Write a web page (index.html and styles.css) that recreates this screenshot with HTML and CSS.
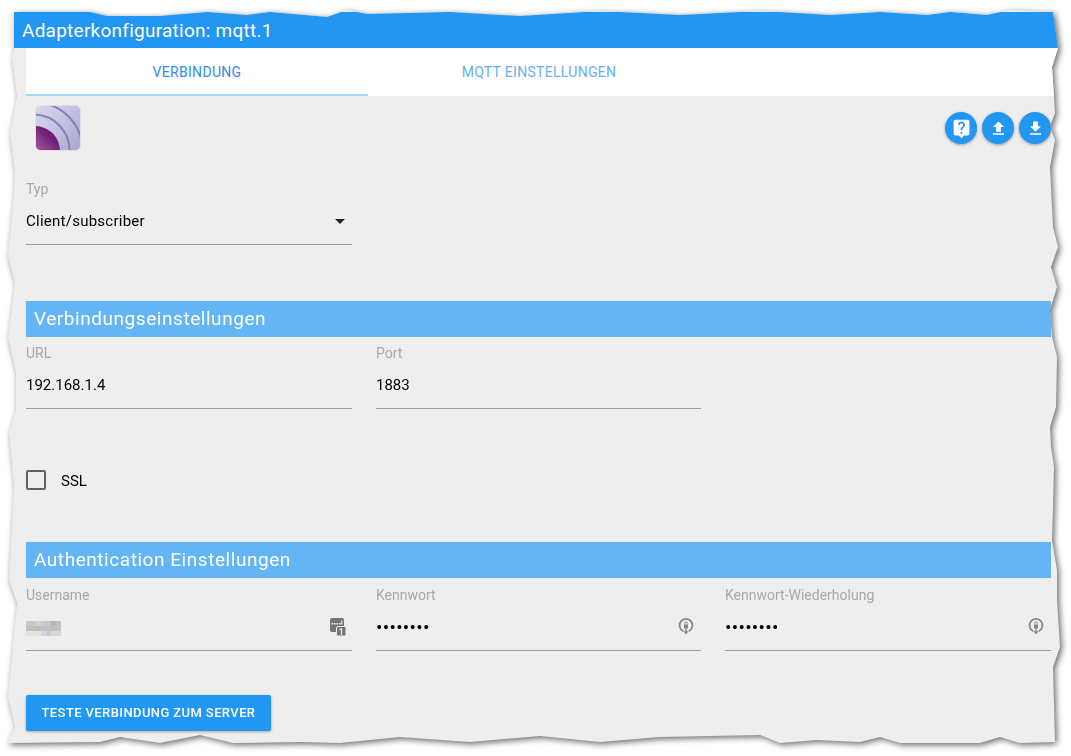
FILE: index.html
```html
<!DOCTYPE html>
<html lang="de">
<head>
<meta charset="utf-8">
<title>Adapterkonfiguration: mqtt.1</title>
<link rel="stylesheet" href="styles.css">
</head>
<body>
<div class="shadow">
  <main class="sheet">
    <header class="title">Adapterkonfiguration: mqtt.1</header>
    <div class="content">
      <nav class="tabs">
        <div class="tab active">Verbindung</div>
        <div class="tab">MQTT Einstellungen</div>
      </nav>
      <div class="toolbar">
        <svg class="logo" viewBox="0 0 46 46" aria-label="mqtt">
          <defs>
            <linearGradient id="bg" x1="0" y1="0" x2="1" y2="1">
              <stop offset="0" stop-color="#dcd9ee"/>
              <stop offset="1" stop-color="#a9a6cf"/>
            </linearGradient>
            <linearGradient id="pu" x1="0" y1="1" x2="1" y2="0">
              <stop offset="0" stop-color="#a45f9f"/>
              <stop offset="0.6" stop-color="#6f1d77"/>
              <stop offset="1" stop-color="#5e1368"/>
            </linearGradient>
            <clipPath id="rr"><rect x="0.5" y="0.5" width="45" height="45" rx="5"/></clipPath>
          </defs>
          <g clip-path="url(#rr)">
            <rect width="46" height="46" fill="url(#bg)"/>
            <path d="M0 21a25 25 0 0 1 25 25H0z" fill="url(#pu)"/>
            <path d="M0 9.500a36 36 0 0 1 34.500 36.500" fill="none" stroke="#8583b4" stroke-width="2"/>
            <path d="M12 -1a48 48 0 0 1 34 34" fill="none" stroke="#8583b4" stroke-width="2"/>
          </g>
          <rect x="0.5" y="0.5" width="45" height="45" rx="5" fill="none" stroke="#e6dcee"/>
        </svg>
        <div class="actions">
          <button class="fab" aria-label="Hilfe"><svg class="fab-help" viewBox="0 0 24 24"><path d="M19 2H5c-1.110 0-2 .9-2 2v14c0 1.100.89 2 2 2h4l3 3 3-3h4c1.100 0 2-.9 2-2V4c0-1.100-.9-2-2-2zm-6 16h-2v-2h2v2zm2.070-7.750l-.9.92C13.450 11.900 13 12.500 13 14h-2v-.5c0-1.100.45-2.100 1.170-2.830l1.240-1.260c.37-.36.59-.86.59-1.410 0-1.100-.9-2-2-2s-2 .9-2 2H8c0-2.210 1.790-4 4-4s4 1.790 4 4c0 .88-.36 1.680-.93 2.250z"/></svg></button>
          <button class="fab" aria-label="Hochladen"><svg viewBox="0 0 24 24"><path d="M9 16h6v-6h4l-7-7-7 7h4zm-4 2h14v2H5z"/></svg></button>
          <button class="fab" aria-label="Herunterladen"><svg viewBox="0 0 24 24"><path d="M19 9h-4V3H9v6H5l7 7 7-7zM5 18v2h14v-2H5z"/></svg></button>
        </div>
      </div>

      <div class="grid">
        <div class="field">
          <div class="label">Typ</div>
          <div class="control"><span class="select-value">Client/subscriber</span><span class="caret"></span></div>
        </div>
      </div>

      <h2 class="section first">Verbindungseinstellungen</h2>
      <div class="grid tight">
        <div class="field">
          <div class="label">URL</div>
          <div class="control"><span>192.168.1.4</span></div>
        </div>
        <div class="field">
          <div class="label">Port</div>
          <div class="control"><span>1883</span></div>
        </div>
      </div>

      <label class="check"><span class="box"></span><span class="check-text">SSL</span></label>

      <h2 class="section second">Authentication Einstellungen</h2>
      <div class="grid">
        <div class="field">
          <div class="label">Username</div>
          <div class="control">
            <svg class="blur" viewBox="0 0 35 15" aria-hidden="true">
              <rect x="0" y="0" width="5" height="5" fill="#cbcac3"/><rect x="5" y="0" width="5" height="5" fill="#c6c8c4"/><rect x="10" y="0" width="5" height="5" fill="#d0d2da"/><rect x="15" y="0" width="5" height="5" fill="#c8c8c4"/><rect x="20" y="0" width="5" height="5" fill="#c4c4c0"/><rect x="25" y="0" width="5" height="5" fill="#bbb5bc"/><rect x="30" y="0" width="5" height="5" fill="#c0c2c1"/>
              <rect x="0" y="5" width="5" height="5" fill="#b9c2b8"/><rect x="5" y="5" width="5" height="5" fill="#bcc3ba"/><rect x="10" y="5" width="5" height="5" fill="#c2bca8"/><rect x="15" y="5" width="5" height="5" fill="#b9c2cc"/><rect x="20" y="5" width="5" height="5" fill="#c0c2c6"/><rect x="25" y="5" width="5" height="5" fill="#c1bdc2"/><rect x="30" y="5" width="5" height="5" fill="#c4c4c6"/>
              <rect x="0" y="10" width="5" height="5" fill="#e2e4e0"/><rect x="5" y="10" width="5" height="5" fill="#e3e3df"/><rect x="10" y="10" width="5" height="5" fill="#e2e2e0"/><rect x="15" y="10" width="5" height="5" fill="#d2d5dc"/><rect x="20" y="10" width="5" height="5" fill="#c8cad2"/><rect x="25" y="10" width="5" height="5" fill="#d6d6d6"/><rect x="30" y="10" width="5" height="5" fill="#d8d8d8"/>
            </svg>
            <svg class="field-icon" viewBox="0 0 16 18" aria-hidden="true">
              <rect x="0" y="0" width="14" height="14" rx="2" fill="#757575"/>
              <path d="M1.500 5h1.600v1.600H1.500zM4 5h1.600v1.600H4zM6.500 5h1.600v1.600H6.500zM9 5h1.600v1.600H9zM11.300 2.500h1.100v4.100h-1.100z" fill="#eee"/>
              <rect x="6.500" y="8.500" width="9.500" height="9.500" rx="1.500" fill="#757575" stroke="#eee" stroke-width="1"/>
              <text x="11.300" y="16.600" class="badge">1</text>
            </svg>
          </div>
        </div>
        <div class="field">
          <div class="label">Kennwort</div>
          <div class="control"><span class="dots">••••••••</span>
            <svg class="field-icon pw" viewBox="0 0 16 18" aria-hidden="true">
              <path d="M5.300 14.300A6.500 6.500 0 1 1 10.700 14.300" fill="none" stroke="#858585" stroke-width="1.700"/>
              <path d="M6 7.500h4v4H6z" fill="#858585"/>
              <path d="M6.700 7.500V6.200a1.300 1.300 0 0 1 2.600 0V7.500" fill="none" stroke="#858585" stroke-width=".9"/>
              <path d="M7.300 12h1.400v2.200h2L8 17.500 5.300 14.200h2z" fill="#858585"/>
            </svg>
          </div>
        </div>
        <div class="field">
          <div class="label">Kennwort-Wiederholung</div>
          <div class="control"><span class="dots">••••••••</span>
            <svg class="field-icon pw" viewBox="0 0 16 18" aria-hidden="true">
              <path d="M5.300 14.300A6.500 6.500 0 1 1 10.700 14.300" fill="none" stroke="#858585" stroke-width="1.700"/>
              <path d="M6 7.500h4v4H6z" fill="#858585"/>
              <path d="M6.700 7.500V6.200a1.300 1.300 0 0 1 2.600 0V7.500" fill="none" stroke="#858585" stroke-width=".9"/>
              <path d="M7.300 12h1.400v2.200h2L8 17.500 5.300 14.200h2z" fill="#858585"/>
            </svg>
          </div>
        </div>
      </div>

      <button class="test">Teste Verbindung zum Server</button>
    </div>
  </main>
</div>
</body>
</html>
```

FILE: styles.css
```css
* { box-sizing: border-box; }
html, body { margin: 0; background: #fff; }
body { width: 1071px; height: 756px; overflow: hidden; font-family: Roboto, "Liberation Sans", sans-serif; color: #000; }

.shadow {
  width: 1071px;
  height: 756px;
  filter: drop-shadow(2px 2px 3px rgba(0, 0, 0, .6));
}
.sheet {
  width: 1071px;
  height: 756px;
  padding: 12px 0 0 14px;
  background: #eee;
  clip-path: polygon(
    14px 12px, 90px 12px, 107px 16px, 160px 16px, 207px 12px, 247px 15px, 270px 12px, 327px 17px, 347px 10px, 367px 14px,
    450px 12px, 520px 16px, 600px 11px, 680px 15px, 760px 11px, 830px 15px, 880px 12px, 927px 15px, 950px 12px, 987px 15px, 1010px 10px, 1053px 12px,
    1058px 48px, 1052px 67px, 1055px 113px, 1050px 127px, 1055px 140px, 1050px 167px, 1053px 227px, 1058px 247px, 1051px 267px, 1057px 287px, 1050px 310px, 1052px 337px, 1057px 357px, 1056px 407px, 1050px 427px, 1051px 447px, 1054px 467px, 1053px 507px, 1052px 540px, 1057px 570px, 1057px 600px, 1060px 647px, 1053px 667px, 1055px 742px,
    1020px 743px, 1000px 737px, 980px 743px, 900px 743px, 880px 737px, 860px 742px, 817px 740px, 780px 743px, 760px 735px, 660px 737px, 600px 742px, 540px 736px, 470px 742px, 400px 737px, 340px 743px, 300px 742px, 233px 743px, 200px 735px, 160px 743px, 120px 737px, 100px 742px, 7px 743px,
    15px 727px, 8px 697px, 17px 603px, 9px 580px, 14px 487px, 9px 433px, 16px 410px, 16px 373px, 8px 337px, 15px 283px, 8px 257px, 14px 193px, 15px 173px, 10px 133px, 17px 97px, 12px 57px, 14px 48px
  );
}

.title {
  height: 36px;
  margin-right: -10px;
  padding-left: 8px;
  background: #2196f3;
  color: #fff;
  font-size: 19px;
  line-height: 37px;
  letter-spacing: .25px;
}

.content { width: 1025px; margin-left: 12px; }

.tabs { display: flex; width: 1040px; height: 48px; background: #fff; }
.tab {
  width: 342px;
  text-align: center;
  font-size: 14px;
  line-height: 48px;
  text-transform: uppercase;
  color: #64b0f4;
  letter-spacing: .3px;
}
.tab.active { color: #2f8cee; border-bottom: 2px solid #a6d8fd; }

.toolbar { display: flex; justify-content: space-between; height: 84px; }
.logo { display: block; width: 46px; height: 46px; margin: 9px 0 0 9px; }
.actions { display: flex; gap: 5px; padding-top: 16px; }
.fab {
  display: flex;
  align-items: center;
  justify-content: center;
  width: 32px;
  height: 32px;
  padding: 0;
  border: 0;
  border-radius: 50%;
  background: #2196f3;
  box-shadow: 0 1px 3px rgba(0, 0, 0, .35);
}
.fab svg { width: 19px; height: 19px; fill: #fff; }
.fab .fab-help { width: 21px; height: 21px; }

.grid { display: grid; grid-template-columns: 326px 325px 326px; column-gap: 24px; }
.grid.tight { margin-top: 7px; }
.section + .grid { margin-top: 8px; }
.section.first + .grid.tight { margin-top: 7px; }

.label { height: 18px; font-size: 14px; line-height: 18px; color: #a8a8a8; }
.control {
  display: flex;
  align-items: center;
  justify-content: space-between;
  height: 47px;
  padding-right: 6px;
  border-bottom: 1px solid #9e9e9e;
  font-size: 15px;
}
.select-value { letter-spacing: .25px; }
.caret {
  width: 0;
  height: 0;
  margin-right: 1px;
  border: 5.5px solid transparent;
  border-top-color: #222;
  border-bottom: 0;
}
.dots { padding-top: 1px; font-size: 19px; line-height: 20px; letter-spacing: .3px; }
.blur { display: block; width: 35px; height: 15px; margin-top: 2px; }
.field-icon { display: block; width: 16px; height: 18px; }
.field-icon.pw { margin-right: 1px; margin-top: -2px; }
.badge { font: 700 8.5px Roboto, sans-serif; fill: #eee; text-anchor: middle; }

.section {
  height: 36px;
  margin: 0;
  padding-left: 8px;
  background: #64b5f6;
  color: #fff;
  font-size: 19px;
  font-weight: 400;
  line-height: 35px;
  letter-spacing: .55px;
}
.section.first { margin-top: 56px; }
.section.second { margin-top: 52px; }

.check { display: flex; align-items: center; gap: 15px; margin-top: 61px; height: 20px; font-size: 15px; }
.check-text { padding-top: 2px; }
.box { width: 20px; height: 20px; border: 2px solid #616161; border-radius: 2px; }

.test {
  display: block;
  width: 245px;
  height: 36px;
  margin-top: 44px;
  padding: 0 0 2px;
  border: 0;
  border-radius: 2px;
  background: #2196f3;
  color: #fff;
  font-family: inherit;
  font-size: 13px;
  font-weight: 500;
  letter-spacing: .4px;
  text-transform: uppercase;
  box-shadow: 0 1px 3px rgba(0, 0, 0, .3);
}
```
